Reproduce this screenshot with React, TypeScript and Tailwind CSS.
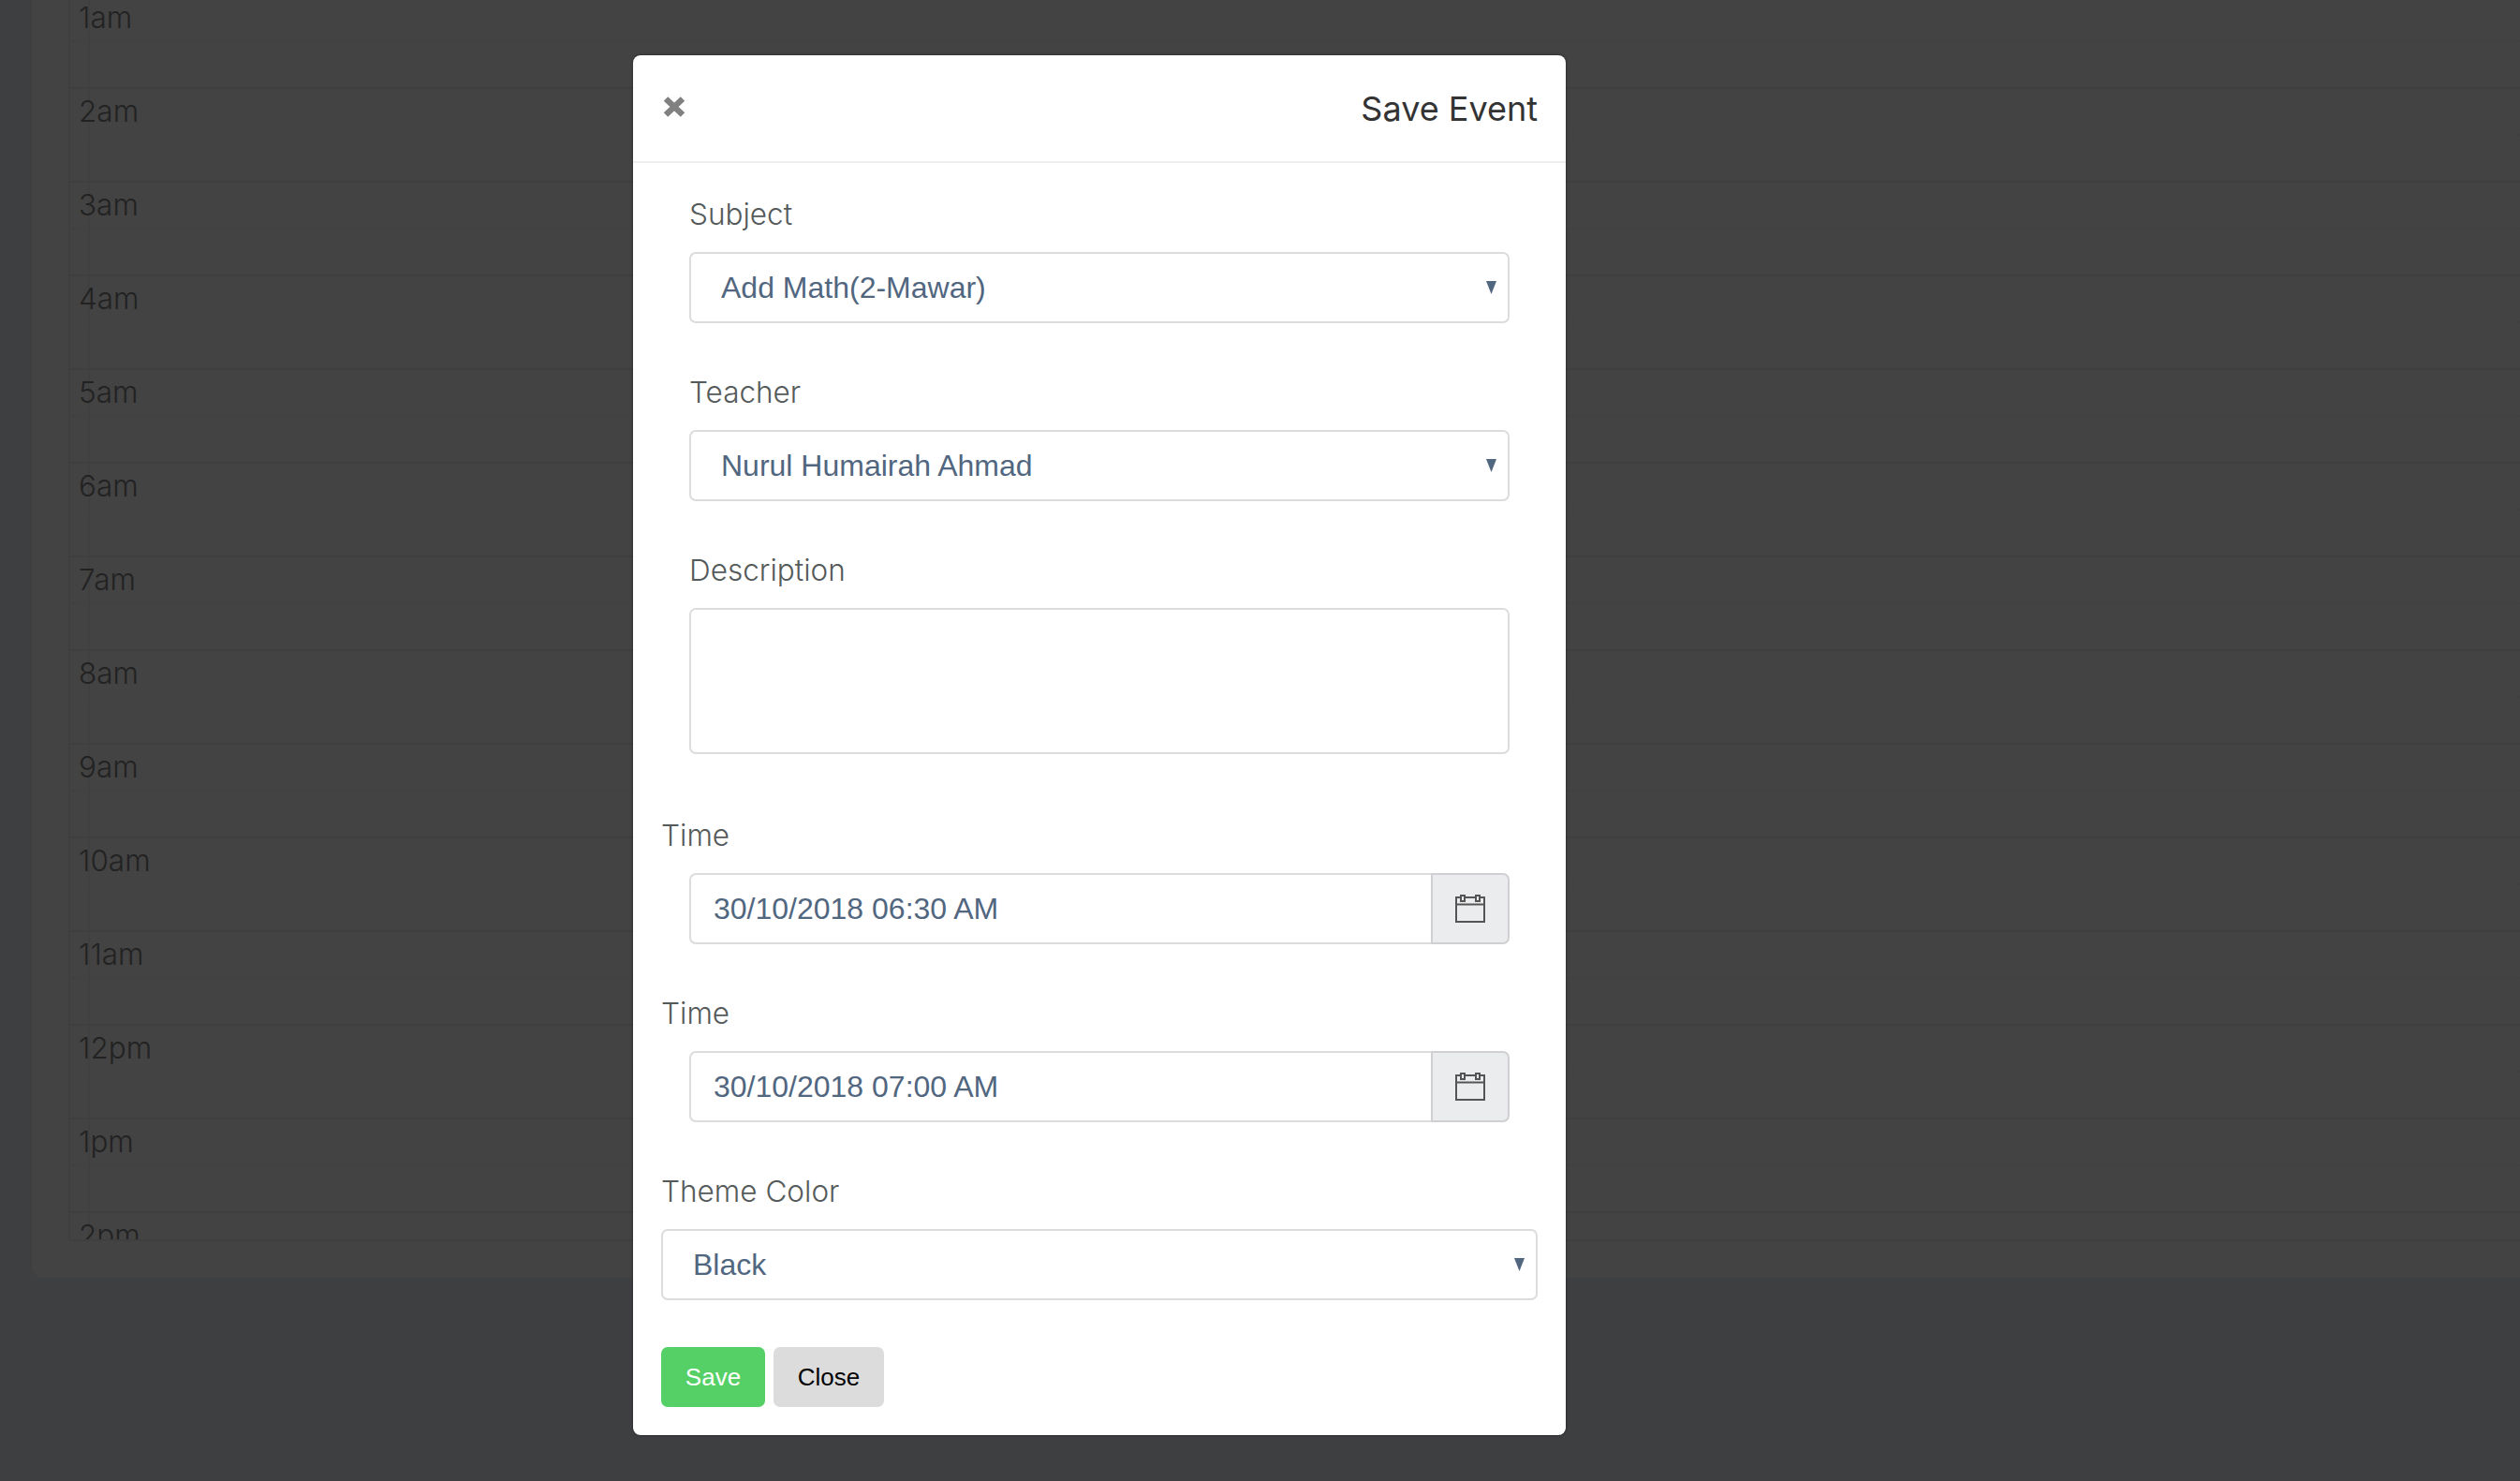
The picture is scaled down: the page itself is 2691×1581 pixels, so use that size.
import React from 'react';

const hours = ['1am', '2am', '3am', '4am', '5am', '6am', '7am', '8am', '9am', '10am', '11am', '12pm', '1pm', '2pm'];

function CalendarIcon() {
  return (
    <svg width="32" height="30" viewBox="0 0 32 30" fill="none" stroke="#555" strokeWidth="2">
      <rect x="1" y="3" width="30" height="26" />
      <path d="M1 10.5h30" />
      <rect x="6" y="1" width="4" height="6" fill="#ebecee" />
      <rect x="22" y="1" width="4" height="6" fill="#ebecee" />
    </svg>
  );
}

function Label({ children, className = '' }: { children: React.ReactNode; className?: string }) {
  return <label className={`mb-[10px] block h-[60px] text-[31.5px] font-light leading-[60px] text-[#555a5a] ${className}`}>{children}</label>;
}

function Select({ value }: { value: string }) {
  return (
    <div className="relative h-[76px] w-full">
      <select
        defaultValue={value}
        className="h-full w-full appearance-none rounded-[7px] border-2 border-[#dcdcdc] bg-white pl-[32px] font-['Liberation_Sans',sans-serif] text-[32px] text-[#51667f] outline-none"
      >
        <option>{value}</option>
      </select>
      <svg className="absolute right-[14px] top-[31px]" width="11" height="14" viewBox="0 0 11 14">
        <path d="M0 0h11L5.5 14z" fill="#51667f" />
      </svg>
    </div>
  );
}

function DateInput({ value }: { value: string }) {
  return (
    <div className="flex h-[76px] w-full">
      <input
        readOnly
        value={value}
        className="h-full min-w-0 flex-1 rounded-l-[7px] border-2 border-r-0 border-[#dcdcdc] bg-white pl-[24px] font-['Liberation_Sans',sans-serif] text-[32px] text-[#51667f] outline-none"
      />
      <div className="flex w-[84px] items-center justify-center rounded-r-[7px] border-2 border-[#d0d0d2] bg-[#ebecee]">
        <CalendarIcon />
      </div>
    </div>
  );
}

export default function App() {
  return (
    <div className="relative h-[1581px] overflow-hidden bg-[#3e3f41] pl-[34px] font-['Inter',sans-serif]">
      {/* calendar behind the backdrop */}
      <div className="h-[1364px] rounded-bl-[12px] bg-[#434343] pl-[39px]">
        <div className="h-[1325px] overflow-hidden border-b-2 border-l-2 border-[#3f3f3f]">
          <div className="-mt-[5px]">
            {hours.map((h) => (
              <div key={h} className="h-[100px] border-b-2 border-[#3f3f3f]">
                <div className="h-[50px] border-b-2 border-dotted border-[#404040]">
                  <div className="flex h-full w-[21px] items-center whitespace-nowrap border-r-2 border-[#404040] pl-[9px] text-[31.5px] font-light text-[#222222]">
                    {h}
                  </div>
                </div>
                <div className="h-[48px] w-[21px] border-r-2 border-[#404040]" />
              </div>
            ))}
          </div>
        </div>
      </div>

      {/* modal */}
      <div className="absolute left-[676px] top-[59px] h-[1473px] w-[996px] rounded-[8px] bg-white shadow-[0_0_3px_rgba(0,0,0,0.5)]">
        <div className="flex h-[115px] items-center justify-between border-b-2 border-[#eeeeee] px-[30px]">
          <svg className="-mt-[3px] ml-[2px]" width="24" height="22" viewBox="0 0 24 22" stroke="#808080" strokeWidth="6.5">
            <path d="M3 2.5l18 17M21 2.5l-18 17" />
          </svg>
          <h4 className="text-[36px] font-normal text-[#333333]">Save Event</h4>
        </div>
        <div className="px-[30px] pt-[25px]">
          <div className="px-[30px]">
            <Label>Subject</Label>
            <Select value="Add Math(2-Mawar)" />
            <Label className="mt-[44px]">Teacher</Label>
            <Select value="Nurul Humairah Ahmad" />
            <Label className="mt-[44px]">Description</Label>
            <textarea className="block h-[156px] w-full resize-none rounded-[7px] border-2 border-[#dcdcdc] bg-white outline-none" />
          </div>
          <Label className="mt-[57px]">Time</Label>
          <div className="px-[30px]">
            <DateInput value="30/10/2018 06:30 AM" />
          </div>
          <Label className="mt-[44px]">Time</Label>
          <div className="px-[30px]">
            <DateInput value="30/10/2018 07:00 AM" />
          </div>
          <Label className="mt-[44px]">Theme Color</Label>
          <Select value="Black" />
          <div className="mt-[50px] flex gap-[9px]">
            <button className="h-[64px] w-[111px] rounded-[7px] bg-[#55d066] font-['Liberation_Sans',sans-serif] text-[26px] text-white">Save</button>
            <button className="h-[64px] w-[118px] rounded-[7px] bg-[#dcdcdc] font-['Liberation_Sans',sans-serif] text-[26px] text-black">Close</button>
          </div>
        </div>
      </div>
    </div>
  );
}
